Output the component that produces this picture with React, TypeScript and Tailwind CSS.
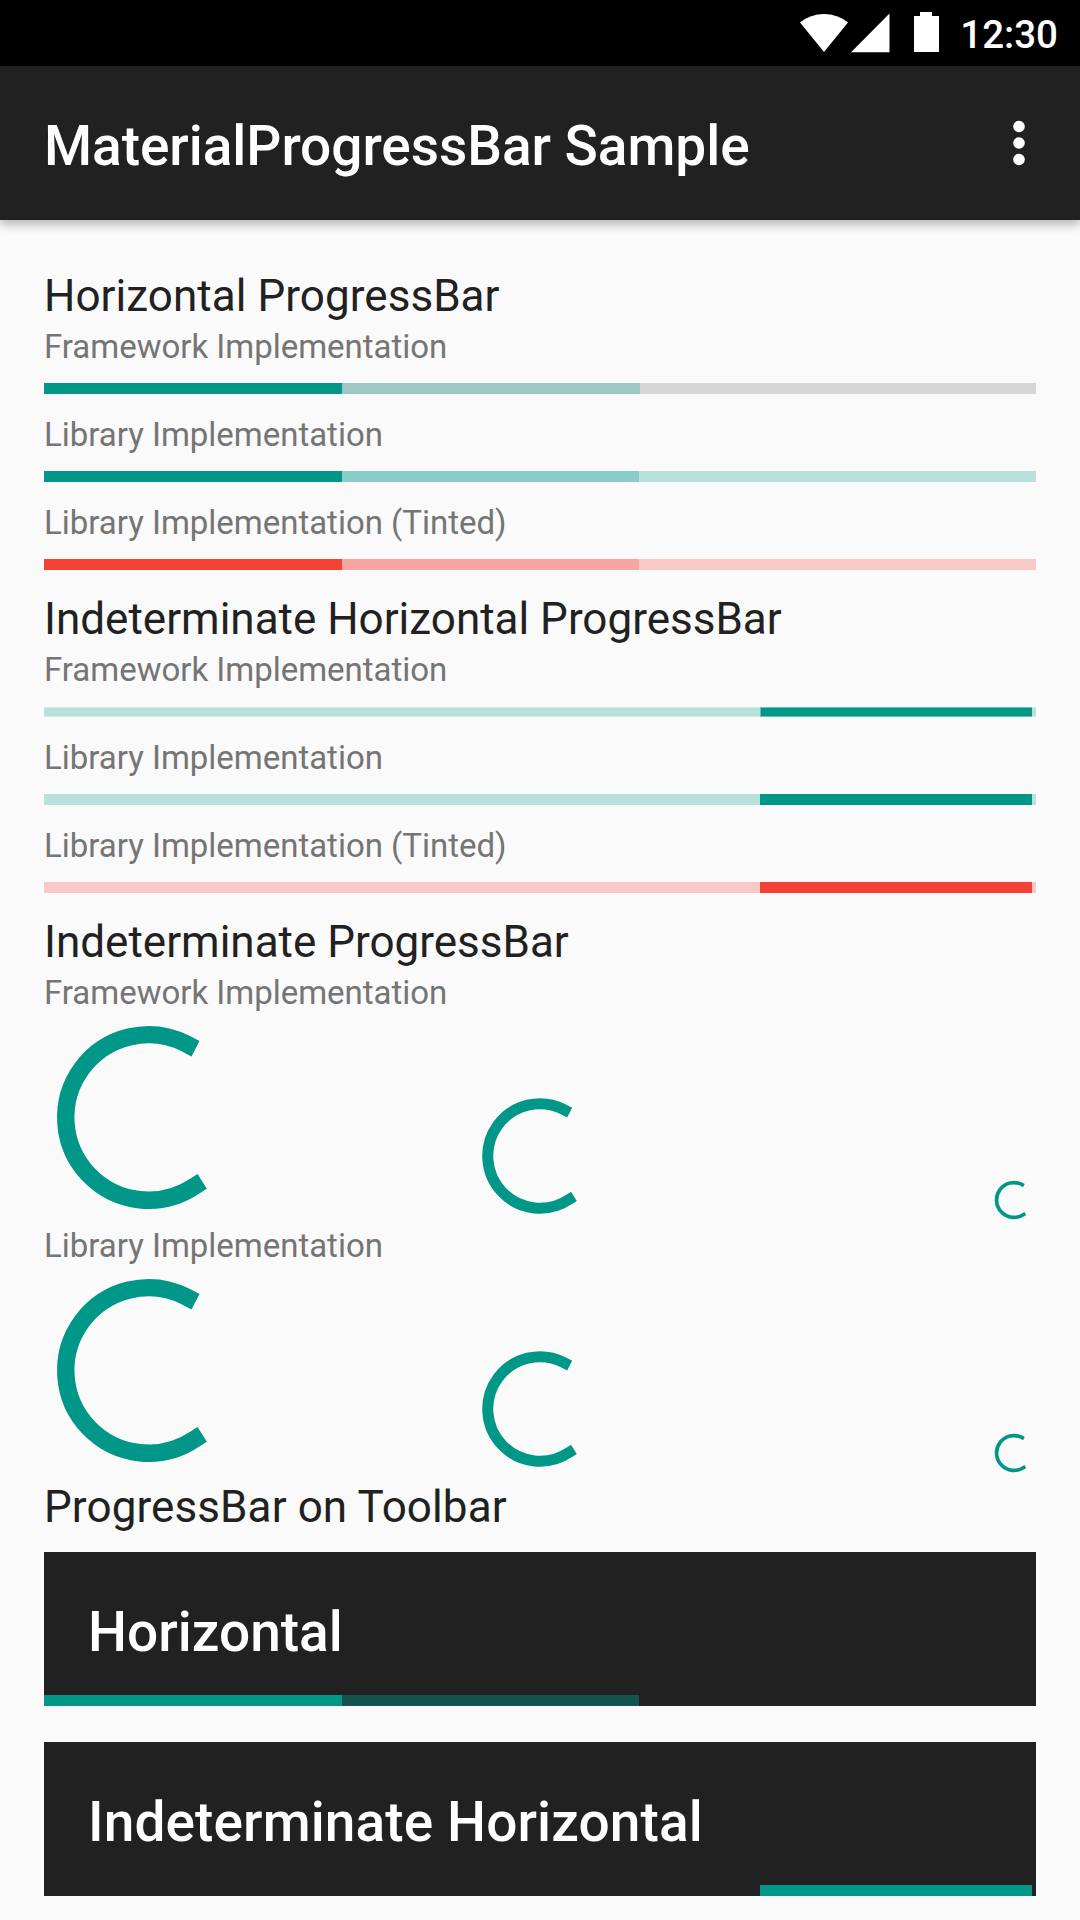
import React from "react";

const H = ({ children, className = "" }: { children: React.ReactNode; className?: string }) => (
  <h2 className={`h-[59px] text-[44px] leading-[60px] text-[#212121] whitespace-nowrap ${className}`}>{children}</h2>
);
const Label = ({ children }: { children: React.ReactNode }) => (
  <p className="h-[43px] text-[33px] leading-[43px] tracking-[-0.02px] text-[#757575] whitespace-nowrap">{children}</p>
);

type BarProps = { track: string; second: string; fill: string };
const Bar = ({ track, second, fill }: BarProps) => (
  <div className="h-[45px] pt-[15px]">
    <div className={`flex h-[11px] w-full ${track}`}>
      <div className={`w-[298px] ${fill}`} />
      <div className={second} />
    </div>
  </div>
);

const Loading = ({ track, fill }: { track: string; fill: string }) => (
  <div className="h-[45px] pt-[15px]">
    <div className={`flex h-[11px] w-full pl-[716px] ${track}`}>
      <div className={`w-[272px] ${fill}`} />
    </div>
  </div>
);

const SoftLoading = () => (
  <div className="h-[45px] pt-[16px]">
    <div className="flex h-[10px] w-full border-y border-[#d4ebe8] bg-[#b9e0dc] pl-[716px]">
      <div className="-my-px w-[272px] border-y border-l border-[#66bfb6] bg-[#009688]" />
    </div>
  </div>
);

const Spinner = ({ size, className = "" }: { size: number; className?: string }) => (
  <svg className={`shrink-0 ${className}`} width={size} height={size} viewBox="-24 -24 48 48" fill="none">
    <path d="M10.79 -15.8 L8.51 -16.99 A19 19 0 1 0 10.65 15.73 L12.33 14.68" stroke="#009688" strokeWidth="4" />
  </svg>
);

const Spinners = () => (
  <div className="flex h-[210px] items-end pb-[2px]">
    <Spinner size={209} />
    <Spinner size={132} className="ml-[221px]" />
    <Spinner size={44} className="ml-auto" />
  </div>
);

type ToolbarProps = { title: string; titleClass?: string; children: React.ReactNode };
const Toolbar = ({ title, titleClass = "", children }: ToolbarProps) => (
  <div className="flex h-[154px] flex-col justify-between bg-[#212121] pt-[48px]">
    <h3 className={`pl-[44px] text-[55px] leading-[64px] font-medium whitespace-nowrap text-white ${titleClass}`}>
      {title}
    </h3>
    <div className="flex h-[11px]">{children}</div>
  </div>
);

export default function App() {
  return (
    <div className="h-[1920px] w-[1080px] overflow-hidden bg-[#fafafa] font-[Roboto,sans-serif]">
      <div className="flex h-[66px] items-start justify-end bg-black pr-[22px] text-white">
        <svg width="140" height="66" viewBox="0 0 140 66" fill="white">
          <path d="M0 22.5 Q10.5 14 24 14 Q37.5 14 48 22.5 L24 52Z" />
          <path d="M51 52.3H89.500V13.500Z" />
          <path d="M114 16h6v-4h12v4h7v36h-25Z" />
        </svg>
        <span className="ml-[20px] pt-[12px] text-[38.5px] leading-[46px] font-medium">12:30</span>
      </div>
      <header className="relative flex h-[154px] items-start justify-between bg-[#212121] pt-[48px] pr-[55px] pl-[44px] text-white shadow-[0_4px_10px_rgba(0,0,0,0.3)]">
        <h1 className="text-[55px] leading-[64px] font-medium tracking-[-0.04px] whitespace-nowrap">MaterialProgressBar Sample</h1>
        <svg className="mt-[6px]" width="12" height="46" viewBox="0 0 12 46" fill="white">
          <circle cx="6" cy="6.5" r="5.8" />
          <circle cx="6" cy="23" r="5.8" />
          <circle cx="6" cy="39.5" r="5.8" />
        </svg>
      </header>
      <main className="px-[44px] pt-[46px]">
        <H className="tracking-[0.05px]">Horizontal ProgressBar</H>
        <Label>Framework Implementation</Label>
        <Bar track="bg-[#d6d6d6]" second="w-[298px] bg-[#9ec6c2]" fill="bg-[#009688]" />
        <Label>Library Implementation</Label>
        <Bar track="bg-[#b9e0dc]" second="w-[297px] bg-[#8acdc6]" fill="bg-[#009688]" />
        <Label>Library Implementation (Tinted)</Label>
        <Bar track="bg-[#f8c9c6]" second="w-[297px] bg-[#f7a6a1]" fill="bg-[#f44336]" />
        <H>Indeterminate Horizontal ProgressBar</H>
        <Label>Framework Implementation</Label>
        <SoftLoading />
        <Label>Library Implementation</Label>
        <Loading track="bg-[#b9e0dc]" fill="bg-[#009688]" />
        <Label>Library Implementation (Tinted)</Label>
        <Loading track="bg-[#f8c9c6]" fill="bg-[#f44336]" />
        <H>Indeterminate ProgressBar</H>
        <Label>Framework Implementation</Label>
        <Spinners />
        <Label>Library Implementation</Label>
        <Spinners />
        <H className="tracking-[0.1px]">ProgressBar on Toolbar</H>
        <div className="flex flex-col gap-[36px] pt-[16px]">
          <Toolbar title="Horizontal">
            <div className="w-[298px] bg-[#009688]" />
            <div className="w-[297px] bg-[#14544e]" />
          </Toolbar>
          <Toolbar title="Indeterminate Horizontal" titleClass="tracking-[0.11px]">
            <div className="ml-[716px] w-[272px] bg-[#009688]" />
          </Toolbar>
        </div>
      </main>
    </div>
  );
}
